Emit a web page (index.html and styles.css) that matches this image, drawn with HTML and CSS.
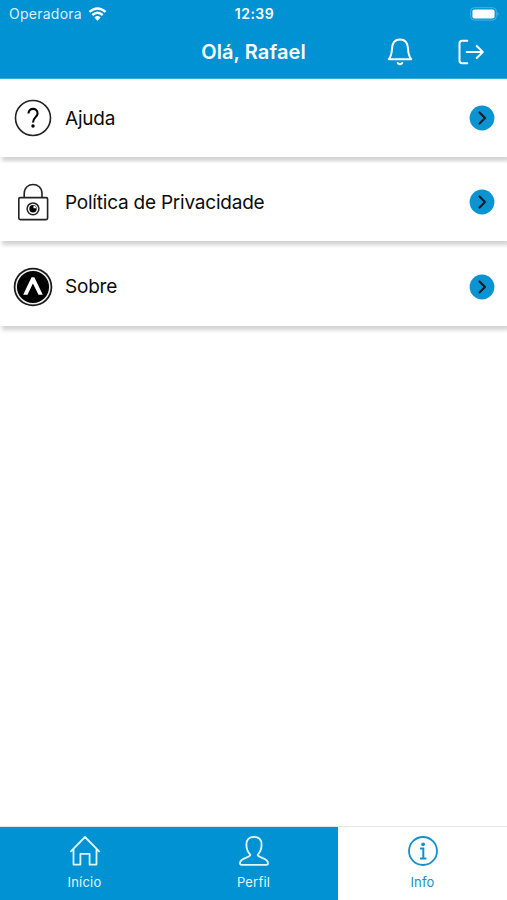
FILE: index.html
```html
<!DOCTYPE html>
<html lang="pt">
<head>
<meta charset="utf-8">
<title>Info</title>
<link rel="stylesheet" href="styles.css">
</head>
<body>
<header class="header">
  <div class="status">
    <div class="carrier"><span>Operadora</span>
      <svg width="19" height="14" viewBox="0 0 18 14" fill="none" stroke="#fff" stroke-width="2.4"><path d="M.9 4.9Q9-2.1 17.1 4.9M3.8 8Q9 3.6 14.2 8"/><path d="M5.9 10.4Q9 7.8 12.1 10.4L9 13.7Z" fill="#fff" stroke="none"/></svg>
    </div>
    <div class="time">12:39</div>
    <svg class="battery" width="30" height="14" viewBox="0 0 30 14"><rect x=".7" y=".7" width="25.6" height="12.4" rx="3.5" fill="none" stroke="#4db2e0"/><rect x="2.4" y="2.4" width="22.2" height="9" rx="2" fill="#fff"/><path d="M27.6 4.7Q29.4 6.9 27.6 9Z" fill="#7cc7ea"/></svg>
  </div>
  <div class="titlebar">
    <h1>Olá, Rafael</h1>
    <div class="actions">
      <svg width="26" height="28" viewBox="0 0 26 28" fill="none" stroke="#fff" stroke-width="2" stroke-linecap="round" stroke-linejoin="round"><path d="M1.8 21.2C4.7 17.8 4.8 14.4 5 10.5C5.3 5 8.2 1.6 13 1.6S20.7 5 21 10.5C21.2 14.4 21.3 17.8 24.2 21.2Z"/><path d="M10.8 25Q13 27.5 15.2 25"/></svg>
      <svg width="28" height="28" viewBox="0 0 28 28" fill="none" stroke="#fff" stroke-width="2" stroke-linecap="round" stroke-linejoin="round"><path d="M10.3 2.8H5.2Q2.5 2.8 2.5 5.5V22.5Q2.5 25.2 5.2 25.2H10.3M9.7 14H25.8M19.7 8L25.8 14L19.7 20"/></svg>
    </div>
  </div>
</header>
<main class="list">
  <div class="row">
    <svg width="40" height="40" viewBox="0 0 40 40" fill="none" stroke="#222" stroke-width="1.6"><circle cx="20" cy="20" r="17.5"/><path d="M15.5 15.4C15.5 9.4 24.6 9.4 24.6 15.2C24.6 19.1 20 19.3 20 24.4" stroke="#000" stroke-width="2.1"/><circle cx="20" cy="28" r="1.7" fill="#000" stroke="none"/></svg>
    <span class="label">Ajuda</span>
    <svg class="go" width="26" height="26" viewBox="0 0 26 26"><circle cx="13" cy="13" r="12.4"/><path d="M10.5 7.5L16 13L10.5 18.5"/></svg>
  </div>
  <div class="row">
    <svg width="40" height="40" viewBox="0 0 40 40" fill="none" stroke="#222" stroke-width="1.6"><rect x="5.8" y="15.6" width="28.8" height="22" rx="1.5"/><path d="M11.2 15.4V11.5C11.2-.5 29-.5 29 11.5V15.4"/><circle cx="20" cy="26.8" r="5.9" stroke-width="1.5"/><circle cx="20" cy="26.8" r="3.7" fill="#000" stroke="none"/><path d="M20.5 26.3V23.5A3 3 0 0 1 23.2 26.3Z" fill="#fff" stroke="none"/></svg>
    <span class="label">Política de Privacidade</span>
    <svg class="go" width="26" height="26" viewBox="0 0 26 26"><circle cx="13" cy="13" r="12.4"/><path d="M10.5 7.5L16 13L10.5 18.5"/></svg>
  </div>
  <div class="row">
    <svg width="40" height="40" viewBox="0 0 40 40"><circle cx="20" cy="20" r="19.3" fill="#181818"/><circle cx="20" cy="20" r="16.8" fill="#000" stroke="#eee" stroke-width="1.5"/><path d="M10.2 27.7L18.5 10.3H21.3L29.8 27.7H25.5L19.9 16.4L14.5 27.7Z" fill="#fff"/></svg>
    <span class="label">Sobre</span>
    <svg class="go" width="26" height="26" viewBox="0 0 26 26"><circle cx="13" cy="13" r="12.4"/><path d="M10.5 7.5L16 13L10.5 18.5"/></svg>
  </div>
</main>
<nav class="tabs">
  <div class="tab">
    <svg width="32" height="32" viewBox="0 0 32 32" fill="none" stroke="currentColor" stroke-width="1.8" stroke-linejoin="round" stroke-linecap="round"><path d="M1.9 16.3L16 2L30.1 16.3M4.5 14V29.6H11.4V18.8H20.6V29.6H27.5V14"/></svg>
    <span>Início</span>
  </div>
  <div class="tab">
    <svg width="32" height="32" viewBox="0 0 32 32" fill="none" stroke="currentColor" stroke-width="1.8" stroke-linejoin="round"><path d="M12.4 19.8C9.6 17.2 8.4 13.8 8.4 9.6C8.4 4.6 11 1.8 16 1.8S23.6 4.6 23.6 9.6C23.6 13.8 22.4 17.2 19.6 19.8C20.6 23.4 30 22.6 30 28.2Q30 29.8 28.4 29.8H3.6Q2 29.8 2 28.2C2 22.6 11.4 23.4 12.4 19.8Z"/></svg>
    <span>Perfil</span>
  </div>
  <div class="tab active">
    <svg width="32" height="32" viewBox="0 0 32 32" fill="none" stroke="currentColor" stroke-width="1.8"><circle cx="16" cy="16" r="14"/><path d="M13 13.4H16.3V23.5M13 23.6H19.4" stroke-width="2"/><circle cx="16.1" cy="9.3" r="1.9" fill="currentColor" stroke="none"/></svg>
    <span>Info</span>
  </div>
</nav>
</body>
</html>
```
FILE: styles.css
```css
* { box-sizing: border-box; }
body {
  margin: 0;
  height: 900px;
  display: flex;
  flex-direction: column;
  overflow: hidden;
  background: #fff;
  color: #0b0b0b;
  font-family: Inter, "Liberation Sans", sans-serif;
}
svg { display: block; flex: none; }
.header { height: 79px; background: #0092d3; color: #fff; border-bottom: 1px solid #3aa9dc; }
.status {
  height: 27px;
  padding: 0 7px 0 9px;
  display: grid;
  grid-template-columns: 1fr auto 1fr;
  align-items: center;
}
.carrier { display: flex; align-items: center; gap: 6px; font-size: 14px; letter-spacing: .25px; color: #d9f2fc; }
.time { font-size: 14px; font-weight: 600; letter-spacing: .5px; }
.battery { justify-self: end; }
.titlebar {
  height: 50px;
  display: grid;
  grid-template-columns: 1fr auto 1fr;
  align-items: center;
  padding: 0 22px;
}
h1 { grid-column: 2; margin: 0; font-size: 20px; line-height: 24px; font-weight: 600; letter-spacing: .1px; }
.actions { display: flex; justify-content: flex-end; gap: 44px; }
.list { flex: 1; display: flex; flex-direction: column; gap: 6.3px; }
.row {
  height: 78px;
  display: flex;
  align-items: center;
  padding: 0 12px 0 13px;
  background: #fff;
  box-shadow: 2px 4px 4px rgba(0, 0, 0, .18);
}
.label { flex: 1; margin-left: 12px; padding-top: 1px; font-size: 19px; line-height: 24px; letter-spacing: -.22px; }
.go circle { fill: #0c94d2; }
.go path { fill: none; stroke: #071d2a; stroke-width: 2.2; stroke-linecap: round; stroke-linejoin: round; }
.tabs { height: 74px; display: flex; border-top: 1px solid #e6e6e6; }
.tab {
  flex: 1;
  padding-top: 8px;
  display: flex;
  flex-direction: column;
  align-items: center;
  gap: 7px;
  background: #0092d3;
  color: #e2f6ff;
  font-size: 13px;
  line-height: 17px;
  letter-spacing: .2px;
}
.tab.active { background: #fff; color: #1590cb; }
```
